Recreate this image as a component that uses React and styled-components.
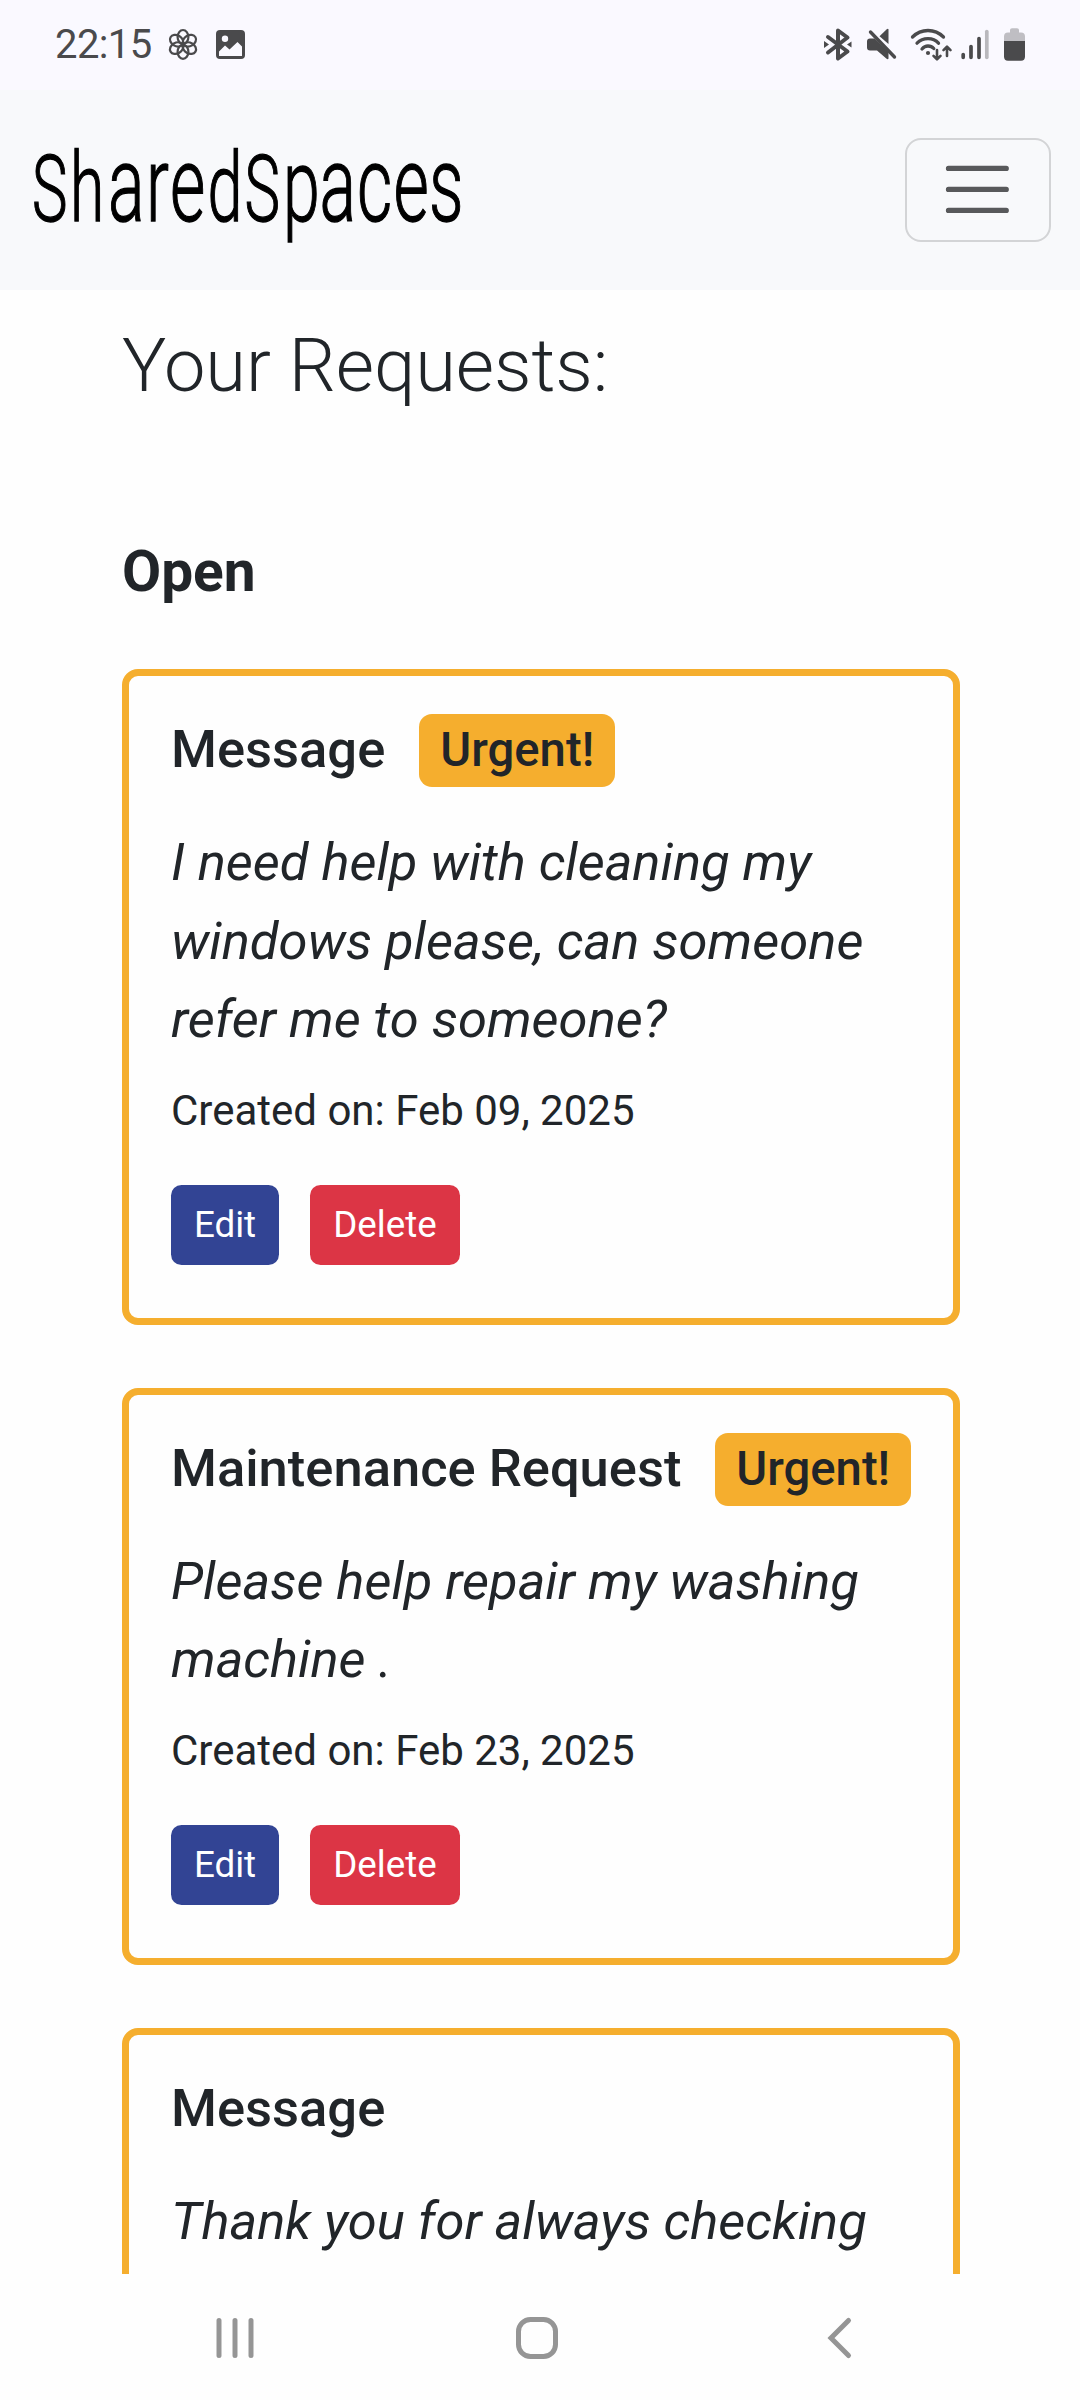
import React from "react";
import styled, { createGlobalStyle, css } from "styled-components";

const GlobalStyle = createGlobalStyle`
  *, *::before, *::after { box-sizing: border-box; }
  body { margin: 0; background: #fff; }
`;

const Screen = styled.div`
  width: 1080px;
  height: 2400px;
  display: flex;
  flex-direction: column;
  overflow: hidden;
  background: #fefefe;
  color: #212529;
  font-family: Roboto, "Liberation Sans", sans-serif;
  font-size: 42px;
  line-height: 1.5;
`;

const StatusBar = styled.div`
  flex: none;
  height: 90px;
  display: flex;
  justify-content: space-between;
  padding: 24px 52px 0 55px;
  background: #faf9ff;
  color: #4a4a4c;
`;

const StatusGroup = styled.div`
  display: flex;
  height: 40px;
`;

const Clock = styled.span`
  width: 111px;
  font-size: 40px;
  line-height: 42px;
  letter-spacing: -0.6px;
`;

const StatusIcon = styled.svg`
  display: block;
  flex: none;
`;

const Navbar = styled.header`
  flex: none;
  height: 200px;
  display: flex;
  align-items: flex-start;
  justify-content: space-between;
  padding: 25px 29px 0 20px;
  background: #f8f9fb;
`;

const Brand = styled.svg`
  display: block;
  font-family: Roboto, "Liberation Sans", sans-serif;
  font-weight: 300;
  fill: #000;
  stroke: #000;
  stroke-width: 1.3px;
`;

const Toggler = styled.button`
  width: 146px;
  height: 104px;
  display: flex;
  align-items: center;
  justify-content: center;
  margin-top: 23px;
  padding: 0 1px 1px 0;
  border: 2px solid #d3d4d6;
  border-radius: 16px;
  background: transparent;
`;

const Content = styled.main`
  flex: none;
  height: 1984px;
  overflow: hidden;
  padding: 32px 120px 0 122px;
`;

const PageTitle = styled.h1`
  margin: 0;
  font-size: 74px;
  font-weight: 300;
  line-height: 88px;
  letter-spacing: -0.05px;
`;

const SectionTitle = styled.h3`
  margin: 127px 0 62px;
  font-size: 56.8px;
  font-weight: 700;
  line-height: 70px;
`;

const CardList = styled.div`
  display: flex;
  flex-direction: column;
  gap: 63px;
`;

const Card = styled.article`
  display: flex;
  flex-direction: column;
  padding: 38px 42px 53px;
  border: 7px solid #f5ae2e;
  border-radius: 16px;
`;

const CardHeader = styled.div`
  display: flex;
  align-items: center;
  height: 73px;
  gap: 34px;
  white-space: nowrap;
`;

const CardTitle = styled.h5`
  margin: 0 0 2px;
  font-size: 52.5px;
  font-weight: 500;
  line-height: 63px;
`;

const Badge = styled.span`
  width: 196px;
  height: 73px;
  border-radius: 13px;
  background: #f5ae2e;
  font-size: 47.25px;
  font-weight: 500;
  line-height: 73px;
  text-align: center;
`;

const Message = styled.p`
  margin: 36px 0 20px;
  font-size: 52.5px;
  font-style: italic;
  line-height: 78.5px;
`;

const Created = styled.p`
  margin: 0;
  line-height: 63px;
`;

const Actions = styled.div`
  display: flex;
  gap: 31px;
  margin-top: 43px;
`;

const variants = {
  edit: css`
    width: 108px;
    background: #324494;
  `,
  delete: css`
    width: 150px;
    background: #dc3545;
  `,
};

const ActionButton = styled.button`
  height: 80px;
  padding: 0;
  border: 0;
  border-radius: 10.5px;
  color: #fff;
  font: 400 36.75px/78px Roboto, "Liberation Sans", sans-serif;
  ${(p) => variants[p.$kind]}
`;

const SystemNav = styled.nav`
  flex: none;
  height: 126px;
  display: flex;
  justify-content: space-between;
  align-items: flex-start;
  padding: 40px 225px 0 213px;
`;

const LETTERS = [
  ["S", 35, 92],
  ["h", 73, 96],
  ["a", 111, 105],
  ["r", 149, 105],
  ["e", 173, 105],
  ["d", 210.5, 97],
  ["S", 247.5, 92],
  ["p", 286, 102],
  ["a", 322.5, 105],
  ["c", 360, 105],
  ["e", 396.5, 105],
  ["s", 432, 105],
];

function Logo() {
  const squeeze = 0.65;
  return (
    <Brand width="470" height="140" viewBox="20 115 470 140" role="img" aria-label="SharedSpaces">
      <text transform={`scale(${squeeze} 1)`}>
        {LETTERS.map(([letter, x, size], i) => (
          <tspan key={i} x={(x - 3) / squeeze} y="221.5" fontSize={size}>
            {letter}
          </tspan>
        ))}
      </text>
    </Brand>
  );
}

function FlowerIcon() {
  const petals = [0, 60, 120, 180, 240, 300];
  return (
    <StatusIcon width="34" height="40" viewBox="166 24 34 40" fill="none" stroke="#4a4a4c" strokeWidth="2.2">
      {petals.map((a) => (
        <ellipse key={a} cx="183" cy="37" rx="5.4" ry="7" transform={`rotate(${a} 183 44.4)`} />
      ))}
    </StatusIcon>
  );
}

function GalleryIcon() {
  return (
    <StatusIcon width="48" height="40" viewBox="200 24 48 40">
      <rect x="216" y="30" width="29" height="29" rx="4" fill="#4a4a4c" />
      <circle cx="225" cy="38.7" r="3.2" fill="#faf9ff" />
      <path d="M219 56V51.5L225 45.5L229.5 49.5L237.5 42L242 46.5V56Z" fill="#faf9ff" />
    </StatusIcon>
  );
}

function BluetoothIcon() {
  return (
    <StatusIcon width="43" height="40" viewBox="821 24 43 40" fill="none" stroke="#4a4a4c" strokeWidth="4" strokeLinejoin="round" strokeLinecap="round">
      <path d="M828 37L847.5 51.5L838 58.5V30.5L847.5 37.5L828 52.5" />
      <path d="M829 44.5L824 41V48ZM847 44.5L851.5 41.5V47.5Z" fill="#4a4a4c" stroke="none" />
    </StatusIcon>
  );
}

function MuteIcon() {
  return (
    <StatusIcon width="44" height="40" viewBox="864 24 44 40" fill="#4a4a4c">
      <path d="M888.5 29.2V44L879.5 36.2L886.5 29.5Q888 28.3 888.5 29.2Z" />
      <path d="M870 38.5H874.5L888.5 52V58.5Q888 60 886 58.2L877 50.5H870Q867 50.5 867 47.5V41.5Q867 38.5 870 38.5Z" />
      <path d="M870.5 32L894.5 57" stroke="#4a4a4c" strokeWidth="3.4" strokeLinecap="round" />
    </StatusIcon>
  );
}

function WifiIcon() {
  return (
    <StatusIcon width="51" height="40" viewBox="908 24 51 40" fill="none" stroke="#4a4a4c" strokeWidth="3.3" strokeLinecap="round" strokeLinejoin="round">
      <path d="M912.5 37Q919 30.5 928 30.5T943.5 37" />
      <path d="M917 43.2Q921.5 38.7 928 38.7T938.5 43.2" />
      <path d="M922 49Q924.5 46 928 46T933.8 48.5" />
      <circle cx="928" cy="53" r="2.1" fill="#4a4a4c" stroke="none" />
      <path d="M937 50V59M933.5 55.8L937 59.3L940.5 55.8M947 56V47M943.5 50.2L947 46.7L950.5 50.2" strokeWidth="2.6" />
    </StatusIcon>
  );
}

function SignalIcon() {
  return (
    <StatusIcon width="44" height="40" viewBox="959 24 44 40" stroke="#4a4a4c" strokeWidth="3.7" strokeLinecap="round">
      <path d="M963.2 54.5V57.3M971 46.5V57.3M979 38.5V57.3" />
      <path d="M986.8 31.5V57.3" stroke="#b9b8bd" />
    </StatusIcon>
  );
}

function BatteryIcon() {
  return (
    <StatusIcon width="25" height="40" viewBox="1003 24 25 40">
      <path d="M1010 32.5V30Q1010 28.3 1012 28.3H1017Q1019 28.3 1019 30V32.5H1021Q1025 32.5 1025 36.5V41H1004V36.5Q1004 32.5 1008 32.5Z" fill="#bfbec3" />
      <path d="M1004 41H1025V56.5Q1025 60.7 1021 60.7H1008Q1004 60.7 1004 56.5Z" fill="#4a4a4c" />
    </StatusIcon>
  );
}

const requests = [
  {
    title: "Message",
    urgent: true,
    lines: ["I need help with cleaning my", "windows please, can someone", "refer me to someone?"],
    created: "Feb 09, 2025",
  },
  {
    title: "Maintenance Request",
    urgent: true,
    lines: ["Please help repair my washing", "machine ."],
    created: "Feb 23, 2025",
  },
  { title: "Message", urgent: false, lines: ["Thank you for always checking"] },
];

function RequestCard({ request }) {
  return (
    <Card>
      <CardHeader>
        <CardTitle>{request.title}</CardTitle>
        {request.urgent && <Badge>Urgent!</Badge>}
      </CardHeader>
      <Message>
        {request.lines.map((line, i) => (
          <React.Fragment key={line}>
            {i > 0 && <br />}
            {line}
          </React.Fragment>
        ))}
      </Message>
      {request.created && (
        <>
          <Created>Created on: {request.created}</Created>
          <Actions>
            <ActionButton $kind="edit">Edit</ActionButton>
            <ActionButton $kind="delete">Delete</ActionButton>
          </Actions>
        </>
      )}
    </Card>
  );
}

export default function App() {
  return (
    <Screen>
      <GlobalStyle />
      <StatusBar>
        <StatusGroup>
          <Clock>22:15</Clock>
          <FlowerIcon />
          <GalleryIcon />
        </StatusGroup>
        <StatusGroup>
          <BluetoothIcon />
          <MuteIcon />
          <WifiIcon />
          <SignalIcon />
          <BatteryIcon />
        </StatusGroup>
      </StatusBar>
      <Navbar>
        <Logo />
        <Toggler aria-label="Toggle navigation">
          <svg width="78.75" height="78.75" viewBox="0 0 30 30" fill="none" stroke="#58595b" strokeWidth="2" strokeLinecap="round">
            <path d="M4 7h22M4 15h22M4 23h22" />
          </svg>
        </Toggler>
      </Navbar>
      <Content>
        <PageTitle>Your Requests:</PageTitle>
        <SectionTitle>Open</SectionTitle>
        <CardList>
          {requests.map((request, i) => (
            <RequestCard key={i} request={request} />
          ))}
        </CardList>
      </Content>
      <SystemNav>
        <svg width="44" height="48" viewBox="213 2314 44 48" stroke="#959595" strokeWidth="5" strokeLinecap="round">
          <path d="M219 2320.5V2355.5M235 2320.5V2355.5M251 2320.5V2355.5" />
        </svg>
        <svg width="56" height="48" viewBox="513 2314 56 48" fill="none" stroke="#959595" strokeWidth="5">
          <rect x="518.5" y="2319.5" width="37" height="37" rx="12" />
        </svg>
        <svg width="30" height="48" viewBox="825 2314 30 48" fill="none" stroke="#959595" strokeWidth="5" strokeLinecap="round">
          <path d="M848.5 2320.5L831 2338L848.5 2355.5" />
        </svg>
      </SystemNav>
    </Screen>
  );
}
